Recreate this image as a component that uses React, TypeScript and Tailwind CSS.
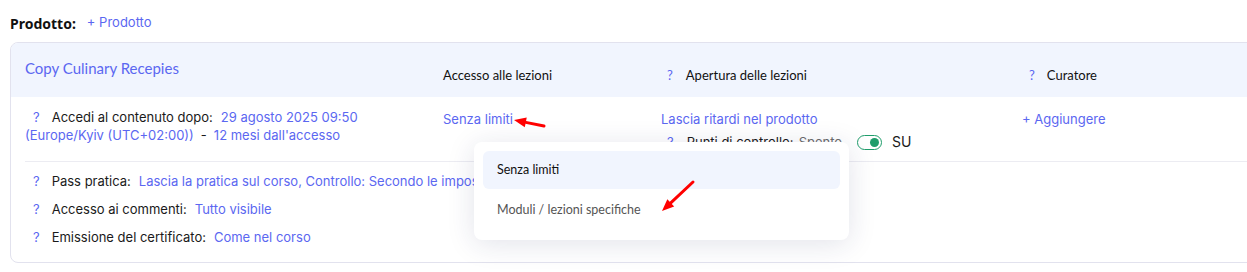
import React from "react";

const blue = "text-[#5b67f1]";

function Q({ className = "" }: { className?: string }) {
  return <span className={`${blue} inline-block ${className}`}>?</span>;
}

function Arrow({ x1, y1, x2, y2 }: { x1: number; y1: number; x2: number; y2: number }) {
  const a = Math.atan2(y2 - y1, x2 - x1);
  const len = 12;
  const w = 5;
  const bx = x2 - Math.cos(a) * len;
  const by = y2 - Math.sin(a) * len;
  const px = -Math.sin(a) * w;
  const py = Math.cos(a) * w;
  return (
    <g>
      <line x1={x1} y1={y1} x2={bx} y2={by} stroke="#f00" strokeWidth={3} strokeLinecap="round" />
      <polygon points={`${x2},${y2} ${bx + px},${by + py} ${bx - px},${by - py}`} fill="#f00" />
    </g>
  );
}

export default function App() {
  return (
    <div className="relative h-[272px] w-[1247px] overflow-hidden bg-white font-['Inter',sans-serif] text-[13px] text-[#1a1a1a]">
      <div className="pl-[10px] pt-[14px]">
        <div className="flex h-[18px] items-center gap-[11px]">
          <span className="font-['Noto_Sans',sans-serif] text-[14px] font-bold text-[#111]">Prodotto:</span>
          <span className={blue}>+ Prodotto</span>
        </div>

        <div className="mt-[10px] w-[1270px] overflow-hidden rounded-[8px] border border-[#e2e2ee]">
          {/* header */}
          <div className="grid h-[54px] grid-cols-[418px_218px_361px_1fr] bg-[#f1f5fe] pl-[14px] font-['Lato',sans-serif]">
            <div className={`pt-[15px] text-[15px] leading-[20px] ${blue}`}>Copy Culinary Recepies</div>
            <div className="pt-[23px] leading-[18px] text-[#111]">Accesso alle lezioni</div>
            <div className="pt-[23px] pl-[6px] leading-[18px] text-[#111]">
              <Q />
              <span className="ml-[13px]">Apertura delle lezioni</span>
            </div>
            <div className="pt-[23px] pl-[7px] leading-[18px] text-[#111]">
              <Q />
              <span className="ml-[12px]">Curatore</span>
            </div>
          </div>

          {/* body row */}
          <div className="grid h-[64px] grid-cols-[418px_218px_361px_1fr] pl-[14px] pt-[11px] leading-[18px]">
            <div>
              <div className="pl-[8px]">
                <Q />
                <span className="ml-[12px]">Accedi al contenuto dopo:</span>
                <span className={`ml-[8px] ${blue}`}>29 agosto 2025 09:50</span>
              </div>
              <div>
                <span className={blue}>(Europe/Kyiv (UTC+02:00))</span>
                <span className="mx-[7px]">-</span>
                <span className={blue}>12 mesi dall'accesso</span>
              </div>
            </div>
            <div className={`pt-[2px] ${blue}`}>Senza limiti</div>
            <div className="pt-[2px]">
              <div className={blue}>Lascia ritardi nel prodotto</div>
              <div className="mt-[5px] flex items-center">
                <Q className="ml-[6px]" />
                <span className="ml-[13px]">Punti di controllo:</span>
                <span className="ml-[5px] text-[#6b6b6b]">Spento</span>
                <span className="ml-[15px] flex h-[15px] w-[25px] items-center justify-end rounded-full border-[1.5px] border-[#1f9d6b] bg-white pr-[2px]">
                  <span className="h-[9px] w-[9px] rounded-full bg-[#1f9d6b]" />
                </span>
                <span className="ml-[10px] text-[14px]">SU</span>
              </div>
            </div>
            <div className={`pt-[2px] ${blue}`}>+ Aggiungere</div>
          </div>

          {/* settings */}
          <div className="ml-[14px] border-t border-[#ececf2] pb-[16px] pt-[10px] leading-[18px]">
            <div className="flex flex-col gap-[10px] pl-[8px]">
              <div className="whitespace-nowrap">
                <Q />
                <span className="ml-[12px]">Pass pratica:</span>
                <span className={`ml-[8px] ${blue}`}>
                  Lascia la pratica sul corso, Controllo: Secondo le impostazioni del corso
                </span>
              </div>
              <div>
                <Q />
                <span className="ml-[12px]">Accesso ai commenti:</span>
                <span className={`ml-[8px] ${blue}`}>Tutto visibile</span>
              </div>
              <div>
                <Q />
                <span className="ml-[12px]">Emissione del certificato:</span>
                <span className={`ml-[8px] ${blue}`}>Come nel corso</span>
              </div>
            </div>
          </div>
        </div>
      </div>

      {/* dropdown */}
      <div className="absolute left-[474px] top-[142px] w-[375px] rounded-[8px] bg-white p-[9px] font-['Lato',sans-serif] text-[12.5px] shadow-[0_4px_28px_rgba(30,40,90,0.13)]">
        <div className="flex h-[38px] items-center rounded-[6px] bg-[#f1f5fe] pl-[14px] text-[#111]">Senza limiti</div>
        <div className="flex h-[42px] items-center pl-[14px] text-[#555]">Moduli / lezioni specifiche</div>
      </div>

      <svg className="pointer-events-none absolute left-0 top-0" width="1247" height="272">
        <Arrow x1={544} y1={126} x2={514} y2={120} />
        <Arrow x1={693} y1={182} x2={662} y2={211} />
      </svg>
    </div>
  );
}
